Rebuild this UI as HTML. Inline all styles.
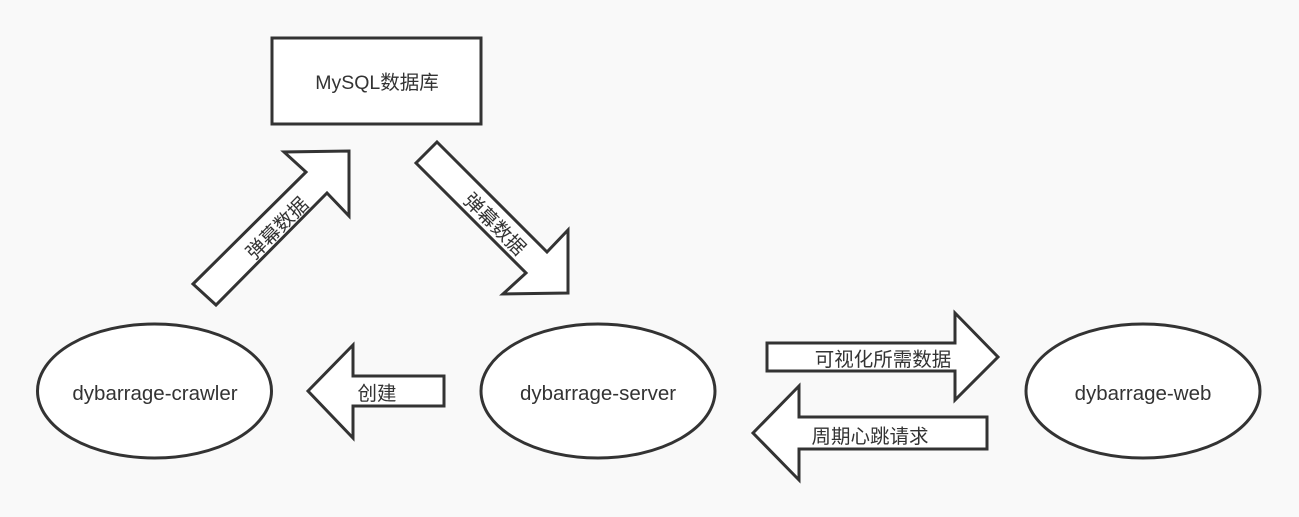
<!DOCTYPE html>
<html><head><meta charset="utf-8"><style>
html,body{margin:0;padding:0;background:#f9f9f9;}
svg{display:block}
text{font-family:"Liberation Sans","Noto Sans CJK SC",sans-serif;fill:#333;}
</style></head><body>
<svg width="1299" height="517" viewBox="0 0 1299 517" xmlns="http://www.w3.org/2000/svg">
<g fill="#fff" stroke="#333" stroke-width="3" stroke-linejoin="miter">
<rect x="272" y="38" width="209" height="86"/>
<ellipse cx="154.5" cy="391" rx="117" ry="67"/>
<ellipse cx="598" cy="391" rx="117" ry="67"/>
<ellipse cx="1143" cy="391" rx="117" ry="67"/>
<polygon points="193,284 306,172 284,152 349,151 349,216 327,193 216,305"/>
<polygon points="437,142 547,252 568,230 568,293 503,294 526,273 416,163"/>
<polygon points="308,391 353,345 353,376 444,376 444,406 353,406 353,438"/>
<polygon points="767,343 955,343 955,313 998,357 955,400 955,371 767,371"/>
<polygon points="753,433 799,386 799,417 987,417 987,449 799,449 799,480"/>
</g>
<g font-size="19.5" text-anchor="middle">
<text x="377" y="89">MySQL数据库</text>
</g>
<g font-size="20.5" text-anchor="middle">
<text x="155" y="400">dybarrage-crawler</text>
<text x="598" y="400">dybarrage-server</text>
<text x="1143" y="400">dybarrage-web</text>
</g>
<g font-size="19.5" text-anchor="middle">
<text x="377" y="400">创建</text>
<text x="883" y="366">可视化所需数据</text>
<text x="870" y="443">周期心跳请求</text>
<text transform="translate(282,233) rotate(-45)">弹幕数据</text>
<text transform="translate(490,229) rotate(45)">弹幕数据</text>
</g>
</svg>
</body></html>
